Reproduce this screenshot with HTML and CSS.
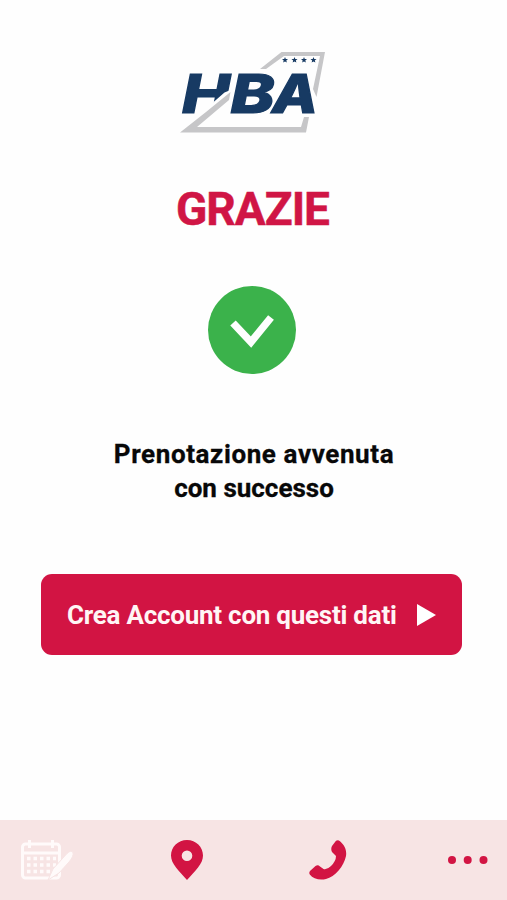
FILE: index.html
```html
<!DOCTYPE html>
<html lang="it">
<head>
<meta charset="utf-8">
<meta name="viewport" content="width=device-width, initial-scale=1">
<title>Grazie</title>
<link rel="stylesheet" href="styles.css">
</head>
<body>
<main class="content">
  <svg class="logo" viewBox="175 45 155 92" role="img" aria-label="HBA">
    <text class="logo-text" x="182" y="112.500" textLength="48" lengthAdjust="spacingAndGlyphs">H</text>
    <path class="logo-cut" d="M209 116 211.500 99 213 102.500 224.500 92.500 233 89 230 116Z"/>
    <g class="logo-frame">
      <path d="M260 69 281.500 52H325L316.500 97 313 89 320 56H284L266 69Z"/>
      <path d="M230.500 92 229 100 197 127H301L304 117H309L306 132.500H180L206 112Z"/>
    </g>
    <g class="logo-text">
      <text x="230.500" y="112.500" textLength="44" lengthAdjust="spacingAndGlyphs">B</text>
      <text x="272" y="112.500" textLength="46" lengthAdjust="spacingAndGlyphs">A</text>
    </g>
    <defs><path id="star" d="M0-3 .8-1 3-.9 1.300.5 1.900 2.600 0 1.400-1.900 2.600-1.300.5-3-.9-.8-1Z"/></defs>
    <g class="logo-star">
      <use href="#star" x="285" y="60"/><use href="#star" x="294.500" y="60"/>
      <use href="#star" x="304" y="60"/><use href="#star" x="313.500" y="60"/>
    </g>
  </svg>
  <h1 class="title">GRAZIE</h1>
  <svg class="success" viewBox="0 0 88 88" aria-hidden="true">
    <circle cx="44" cy="44" r="44"/>
    <path d="M25 37 43 56 63 31.500"/>
  </svg>
  <p class="message"><span class="line line-first">Prenotazione avvenuta</span><span class="line line-second">con successo</span></p>
  <button class="cta">
    <span class="cta-label">Crea Account con questi dati</span>
    <svg class="play" viewBox="0 0 19 22" aria-hidden="true"><path d="M0 0 19 11 0 22Z"/></svg>
  </button>
</main>
<nav class="tabs">
  <svg class="calendar" viewBox="0 0 54 42" aria-hidden="true">
    <rect x="2.500" y="5" width="37" height="34" rx="3"/>
    <path d="M2 14H39M9.500 1V9M32.500 1V9"/>
    <path class="days" d="M7 19.500H36M7 26H36M7 32.500H30"/>
    <path class="pen" d="M28 41 33 30 47 14.500Q51 10.500 53 13.500 54 17 49 23L39 34Z"/>
  </svg>
  <svg class="pin" viewBox="0 0 32 40" aria-hidden="true"><path fill-rule="evenodd" d="M16 0C7 0 0 7 0 15.500 0 24 8 31 16 40 24 31 32 24 32 15.500 32 7 25 0 16 0ZM16 10.500A5.300 5.300 0 1 1 16 21.100 5.300 5.300 0 0 1 16 10.500Z"/></svg>
  <svg class="phone" viewBox="0 0 38 40" aria-hidden="true"><path d="M27 .8Q29-.6 31 1.200C35 5 38 9 37 16 35 26 26 37 17 39 11 40.500 4 39 .8 34.500Q-.3 33 1 31L6.500 26Q9 24.500 11 26.500L14.500 29Q18 30 22 26 27 21 27 16L23 12Q21.500 9 23 6Z"/></svg>
  <svg class="more" viewBox="0 0 40 8" aria-hidden="true"><circle cx="4" cy="4" r="4"/><circle cx="19.700" cy="4" r="4"/><circle cx="35.500" cy="4" r="4"/></svg>
</nav>
</body>
</html>
```
FILE: styles.css
```css
* { box-sizing: border-box; }
body {
  margin: 0;
  height: 900px;
  display: flex;
  flex-direction: column;
  background: #fefefe;
  font-family: Roboto, "Liberation Sans", sans-serif;
  font-weight: 700;
  overflow: hidden;
}
svg { display: block; flex: none; }
.content {
  width: 503px;
  height: 820px;
  padding-top: 45px;
  display: flex;
  flex-direction: column;
  align-items: center;
}
.logo { width: 155px; height: 92px; margin-left: 1px; }
.logo-frame { fill: #c6c6c8; }
.logo-text {
  fill: #173a63;
  stroke: #173a63;
  stroke-width: 1.200;
  font: italic 800 53.500px Inter, sans-serif;
}
.logo-cut { fill: #fefefe; }
.logo-star { fill: #173a63; }
.title {
  margin: 42px 0 0 2px;
  height: 61px;
  line-height: 60px;
  font-size: 46px;
  letter-spacing: -1px;
  color: #d01545;
  -webkit-text-stroke: .5px #d01545;
}
.success { width: 88px; height: 88px; margin: 46px 0 0 1px; fill: #3bb24b; }
.success path { fill: none; stroke: #fefefe; stroke-width: 7.500; }
.message {
  margin: 63px 0 0;
  display: flex;
  flex-direction: column;
  align-items: center;
  color: #080808;
  font-size: 26px;
  line-height: 34px;
  -webkit-text-stroke: .3px #080808;
}
.line { white-space: nowrap; }
.line-first { letter-spacing: .6px; margin-left: 5px; }
.line-second { margin-left: 5px; }
.cta {
  width: 421px;
  height: 81px;
  margin: 69px 0 0;
  padding: 0 26px;
  display: flex;
  align-items: center;
  justify-content: space-between;
  border: 0;
  border-radius: 11px;
  background: #d21443;
  color: #fff5f5;
  font: inherit;
  font-size: 26px;
  letter-spacing: -.25px;
  white-space: nowrap;
}
.play { width: 19px; height: 22px; fill: #fff; }
.tabs {
  height: 80px;
  padding: 0 19px 0 20px;
  display: flex;
  align-items: center;
  background: #f7e4e4;
  fill: #d21443;
}
.calendar { width: 54px; height: 42px; fill: none; stroke: #fffafa; stroke-width: 3; }
.calendar .days { stroke-width: 3.500; stroke-dasharray: 3.500 3; }
.calendar .pen { fill: #fffafa; stroke: #f7e4e4; stroke-width: 1; }
.pin { width: 32px; height: 40px; margin-left: 97px; }
.phone { width: 38px; height: 40px; margin-left: 106px; }
.more { width: 40px; height: 8px; margin-left: auto; }
```
